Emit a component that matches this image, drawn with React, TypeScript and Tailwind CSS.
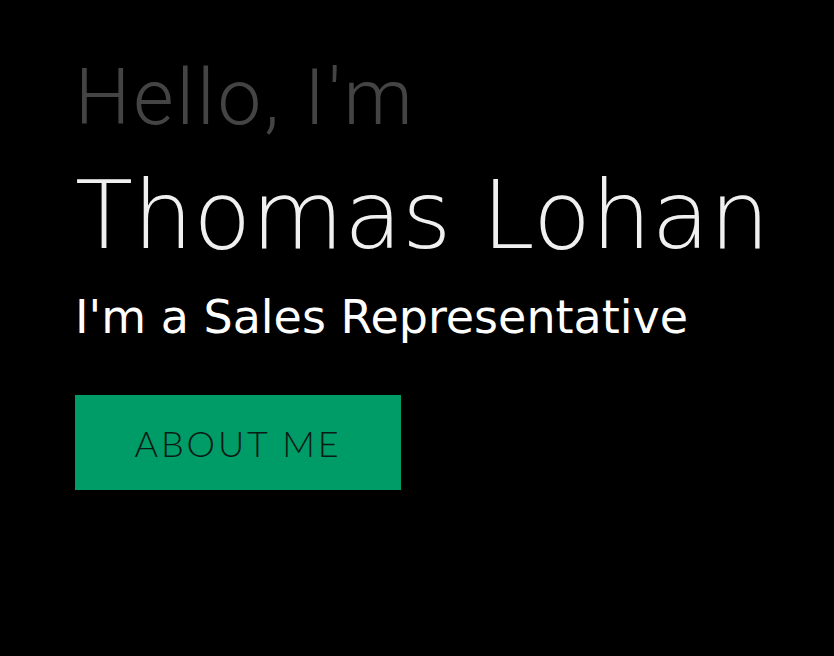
export default function App() {
  return (
    <div className="min-h-[656px] w-full bg-black pl-[75px] pt-[59px]">
      <div className="font-['Roboto','Liberation_Sans',sans-serif] text-[78px] leading-[78px] font-light tracking-[3px] text-[#444444]">
        Hello, I'm
      </div>
      <div className="mt-[23px] font-['DejaVu_Sans','Open_Sans',sans-serif] text-[95px] leading-[110px] font-extralight text-[#f0f0f0]">
        Thomas Lohan
      </div>
      <div className="mt-[19px] font-['DejaVu_Sans','Open_Sans',sans-serif] text-[46px] leading-[56px] font-normal text-white">
        I'm a Sales Representative
      </div>
      <button className="mt-[50px] flex h-[95px] w-[326px] items-center justify-center bg-[#009c68] font-['Lato','Noto_Sans',sans-serif] text-[36px] font-light tracking-[0.08em] text-[#0a1a14]">
        ABOUT ME
      </button>
    </div>
  );
}
